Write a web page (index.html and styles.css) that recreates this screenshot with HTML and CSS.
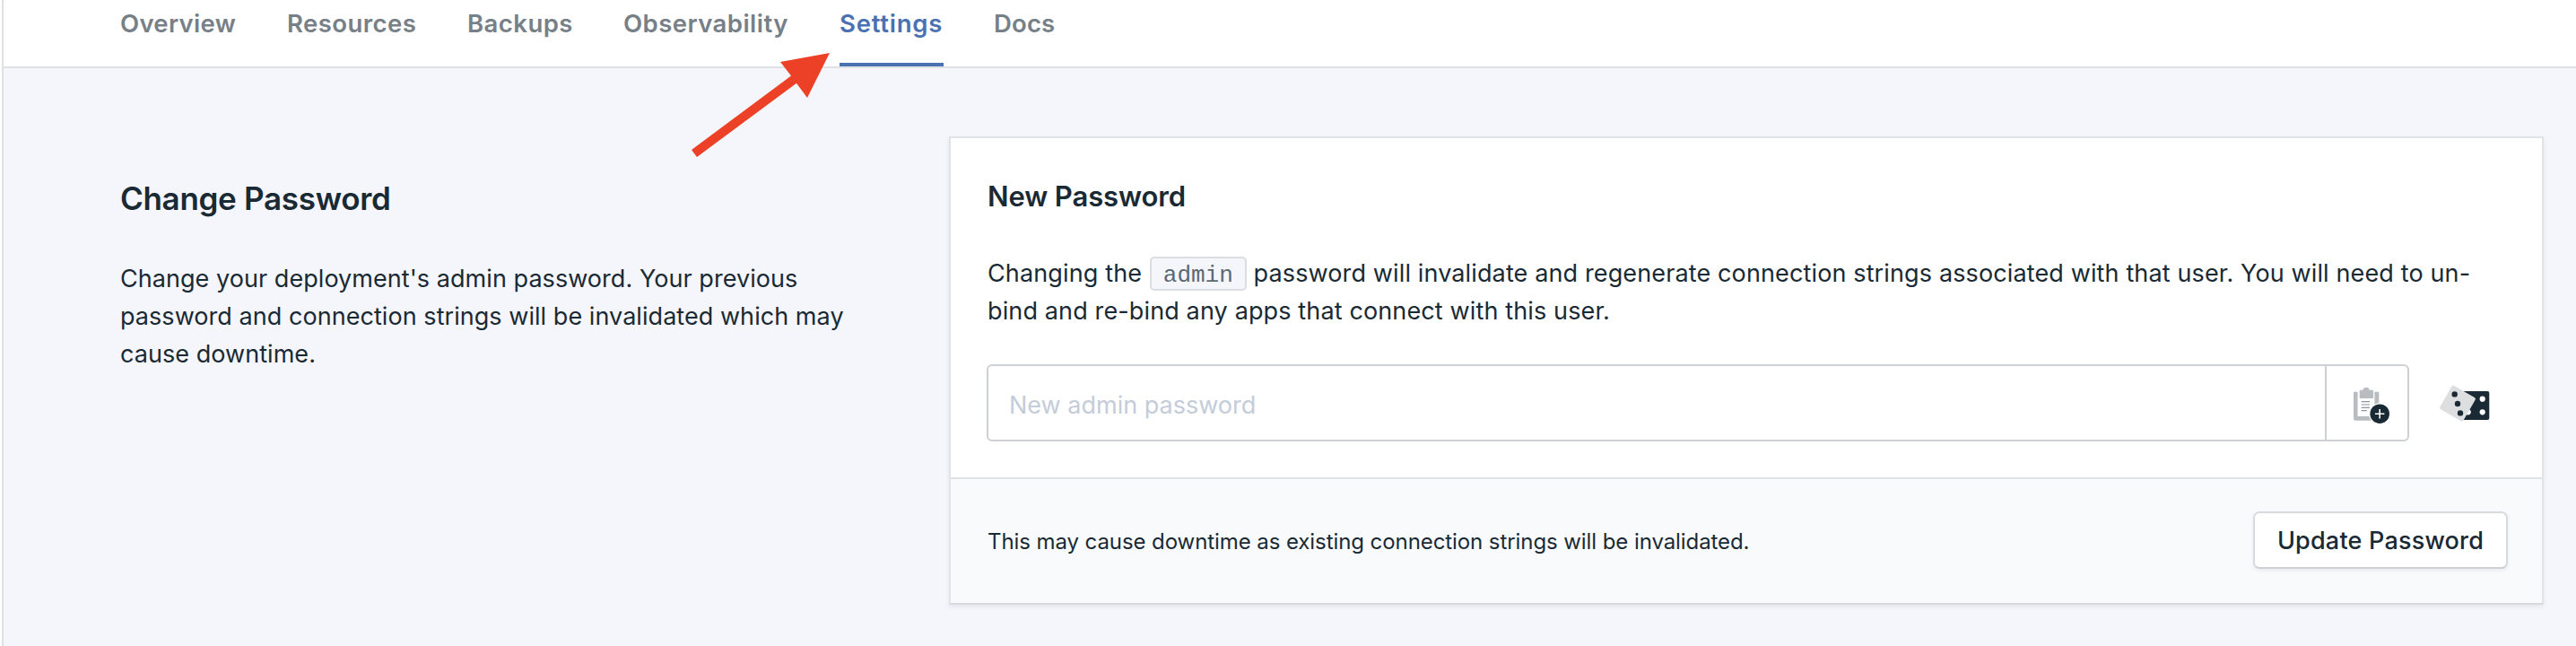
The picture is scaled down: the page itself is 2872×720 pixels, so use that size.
FILE: index.html
```html
<!DOCTYPE html>
<html lang="en">
<head>
<meta charset="utf-8">
<title>Settings</title>
<link rel="stylesheet" href="styles.css">
</head>
<body>
<div class="page">
  <nav class="tabs">
    <a class="tab tab-overview">Overview</a>
    <a class="tab tab-resources">Resources</a>
    <a class="tab tab-backups">Backups</a>
    <a class="tab tab-observability">Observability</a>
    <a class="tab tab-settings active">Settings</a>
    <a class="tab tab-docs">Docs</a>
  </nav>
  <main class="content">
    <section class="intro">
      <h1>Change Password</h1>
      <p>Change your deployment's admin password. Your previous<br>password and connection strings will be invalidated which may<br>cause downtime.</p>
    </section>
    <section class="card">
      <div class="card-body">
        <h2>New Password</h2>
        <p>Changing the <code>admin</code> password will invalidate and regenerate connection strings associated with that user. You will need to un-<br>bind and re-bind any apps that connect with this user.</p>
        <div class="field-row">
          <div class="field">
            <input type="text" placeholder="New admin password">
            <button class="copy" aria-label="Copy">
              <svg width="48" height="48" viewBox="0 0 48 48">
                <path fill="#b9bdc0" d="M9 11.7h4.6V39h23.7v4.7H11a2 2 0 0 1-2-2zM32.4 11.7h4.9V26h-4.9z"/>
                <path fill="#b9bdc0" d="M16.7 9.7h2.8a3.7 3.7 0 0 1 7.2 0h3.4a1 1 0 0 1 1 1V18a1 1 0 0 1-1 1H16.7a1 1 0 0 1-1-1v-7.300a1 1 0 0 1 1-1z"/>
                <path stroke="#8b969b" stroke-width="1.2" d="M17.700 22.700H27M17.700 26H27M17.700 29.400H27M17.700 32.700H24"/>
                <circle cx="38.200" cy="36.200" r="12" fill="#fff"/>
                <circle cx="38.200" cy="36.200" r="10.800" fill="#1a2a34"/>
                <path stroke="#fff" stroke-width="1.600" d="M38.200 31v10.400M33 36.200h10.400"/>
              </svg>
            </button>
          </div>
          <svg class="dice" width="66" height="52" viewBox="0 0 66 52">
            <rect x="28" y="11" width="32.300" height="32" rx="2" fill="#1a2a34"/>
            <g fill="#fff"><circle cx="52.700" cy="19.700" r="3.100"/><circle cx="52.700" cy="34.300" r="3.100"/><circle cx="36.700" cy="34.300" r="3.100"/></g>
            <rect x="9.900" y="9.500" width="30.200" height="30.200" rx="2" fill="#dddee0" transform="rotate(30 25 24.600)"/>
            <g fill="#1a2a34"><circle cx="21.700" cy="14.400" r="3.200"/><circle cx="25" cy="25" r="3.200"/><circle cx="28" cy="35.400" r="3.200"/></g>
          </svg>
        </div>
      </div>
      <footer class="card-footer">
        <span class="note">This may cause downtime as existing connection strings will be invalidated.</span>
        <button class="update">Update Password</button>
      </footer>
    </section>
  </main>
  <svg class="arrow" width="180" height="130" viewBox="0 0 180 130">
    <path fill="#ec4127" d="M160 9L105 19l12 15.600L6 117l6 8L123 42.700 135 59z"/>
  </svg>
</div>
</body>
</html>
```
FILE: styles.css
```css
* { box-sizing: border-box; }
body {
  margin: 0;
  background: #fff;
  color: #1a2a34;
  font-family: Inter, "Liberation Sans", sans-serif;
}
h1, h2, p { margin: 0; }
.page {
  position: relative;
  width: 2870px;
  height: 720px;
  margin-left: 2px;
  border-left: 2px solid #dfe0e3;
  background: #f5f6fb;
  overflow: hidden;
}
.tabs {
  display: flex;
  gap: 56px;
  height: 76px;
  padding-left: 130px;
  background: #fff;
  border-bottom: 2px solid #dfe1e4;
  border-top-left-radius: 4px;
}
.tab {
  height: 74px;
  font-size: 27.5px;
  font-weight: 600;
  line-height: 52px;
  letter-spacing: 0.45px;
  color: #778087;
  white-space: nowrap;
}
.tab-overview { width: 130px; letter-spacing: 0.3px; }
.tab-resources { width: 145px; }
.tab-backups { width: 118px; }
.tab-observability { width: 185px; }
.tab-settings { width: 116px; letter-spacing: 0.75px; }
.tab-docs { letter-spacing: 0.15px; }
.tab.active {
  color: #4a71b0;
  border-bottom: 4px solid #4a71b0;
}
.content {
  display: flex;
  align-items: flex-start;
  padding: 76px 36px 0 130px;
}
.intro { width: 924px; padding-top: 45px; }
h1 {
  margin-bottom: 45px;
  font-size: 35px;
  font-weight: 600;
  line-height: 48px;
  letter-spacing: -0.3px;
}
p {
  font-size: 27px;
  line-height: 42px;
  letter-spacing: 0.05px;
  white-space: nowrap;
}
.card {
  width: 1778px;
  height: 522px;
  border: 2px solid #e0e3e7;
  border-bottom-color: #d6d9df;
  background: #fff;
  box-shadow: 0 2px 5px rgba(26, 42, 52, 0.08);
}
.card-body { height: 378px; padding: 45px 0 0 40px; }
h2 {
  margin: 0 0 45px 1px;
  font-size: 31px;
  font-weight: 600;
  line-height: 40px;
  letter-spacing: -0.1px;
}
.card-body p { height: 84px; margin-left: 1px; letter-spacing: 0.13px; }
code {
  display: inline-block;
  width: 108px;
  height: 38px;
  margin: 0 0 0 1px;
  border: 2px solid #dcdde1;
  border-radius: 5px;
  background: #f5f6fb;
  color: #5c6870;
  font: 26px/38px "Liberation Mono", monospace;
  letter-spacing: 0;
  text-align: center;
}
.field-row { display: flex; align-items: center; gap: 29px; margin-top: 38px; }
.field {
  display: flex;
  width: 1586px;
  height: 86px;
  border: 2px solid #cdd1d5;
  border-radius: 6px;
}
input {
  flex: 1;
  min-width: 0;
  padding: 5px 23px 0;
  border: 0;
  background: none;
  font: 27px Inter, sans-serif;
}
input::placeholder { color: #c4ccd9; opacity: 1; }
button { font-family: inherit; padding: 0; }
.copy {
  display: flex;
  align-items: center;
  justify-content: center;
  width: 92px;
  border: 0;
  border-left: 2px solid #cdd1d5;
  background: none;
}
.copy svg { overflow: visible; }
.dice { margin-top: 4px; }
.card-footer {
  display: flex;
  align-items: center;
  justify-content: space-between;
  height: 140px;
  padding: 0 38px 2px 41px;
  border-top: 2px solid #dfe1e4;
  background: #f9fafc;
}
.note { padding-top: 2px; font-size: 24px; letter-spacing: -0.08px; }
.update {
  width: 284px;
  height: 64px;
  border: 2px solid #d7dade;
  border-bottom-color: #cdd1d6;
  border-radius: 7px;
  background: #fff;
  box-shadow: 0 2px 4px rgba(26, 42, 52, 0.07);
  color: #1a2a34;
  font-size: 27px;
  font-weight: 500;
  letter-spacing: 0.2px;
}
/* annotation drawn over the tab bar and content */
.arrow { position: absolute; left: 761px; top: 50px; }
```
